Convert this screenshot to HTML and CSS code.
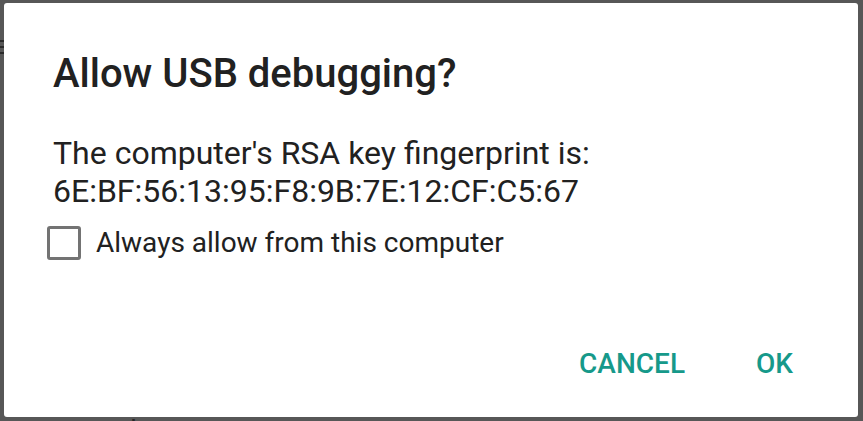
FILE: index.html
```html
<!DOCTYPE html>
<html>
<head>
<meta charset="utf-8">
<link rel="stylesheet" href="styles.css">
</head>
<body>
<div class="backdrop">
  <span class="menu-icon"><i></i><i></i><i></i></span>
  <span class="status">connected</span>
</div>
<div class="dialog">
  <h1 class="title">Allow USB debugging?</h1>
  <p class="message">The computer's RSA key fingerprint is:<br>6E:BF:56:13:95:F8:9B:7E:12:CF:C5:67</p>
  <label class="check">
    <span class="box"></span>
    <span class="check-label">Always allow from this computer</span>
  </label>
  <div class="actions">
    <span class="btn">CANCEL</span>
    <span class="btn">OK</span>
  </div>
</div>
</body>
</html>
```

FILE: styles.css
```css
html, body {
  margin: 0;
  padding: 0;
}
body {
  position: relative;
  width: 863px;
  height: 421px;
  background: #575757;
  font-family: Roboto, "Noto Sans", sans-serif;
  overflow: hidden;
}
.backdrop {
  position: absolute;
  inset: 0;
}
.menu-icon {
  position: absolute;
  left: -20px;
  top: 40px;
  width: 24px;
  display: flex;
  flex-direction: column;
  gap: 4px;
}
.menu-icon i {
  display: block;
  height: 2px;
  background: #2a2a2a;
}
.status {
  position: absolute;
  left: 6px;
  top: 415px;
  font-size: 28px;
  line-height: 32px;
  color: #262626;
}
.dialog {
  position: relative;
  box-sizing: border-box;
  margin: 3px 5px 0 4px;
  height: 414px;
  background: #fff;
  border-radius: 3px;
  padding: 0 0 0 49px;
  display: flex;
  flex-direction: column;
}
.title {
  margin: 47px 0 0 0;
  font-size: 40px;
  line-height: 47px;
  font-weight: 500;
  color: #212121;
}
.message {
  margin: 38px 0 0 0;
  font-size: 32px;
  line-height: 37.5px;
  color: #212121;
}
.check {
  display: flex;
  align-items: flex-start;
  margin: 16px 0 0 -6px;
  gap: 15px;
}
.box {
  box-sizing: border-box;
  width: 34px;
  height: 34px;
  border: 3px solid #737373;
  border-radius: 3px;
}
.check-label {
  font-size: 28px;
  line-height: 34px;
  color: #212121;
}
.actions {
  display: flex;
  justify-content: flex-end;
  gap: 71px;
  margin-top: auto;
  margin-bottom: 37px;
  padding-right: 65px;
}
.btn {
  font-size: 28px;
  font-weight: 500;
  color: #16998a;
  line-height: 33px;
}
```
